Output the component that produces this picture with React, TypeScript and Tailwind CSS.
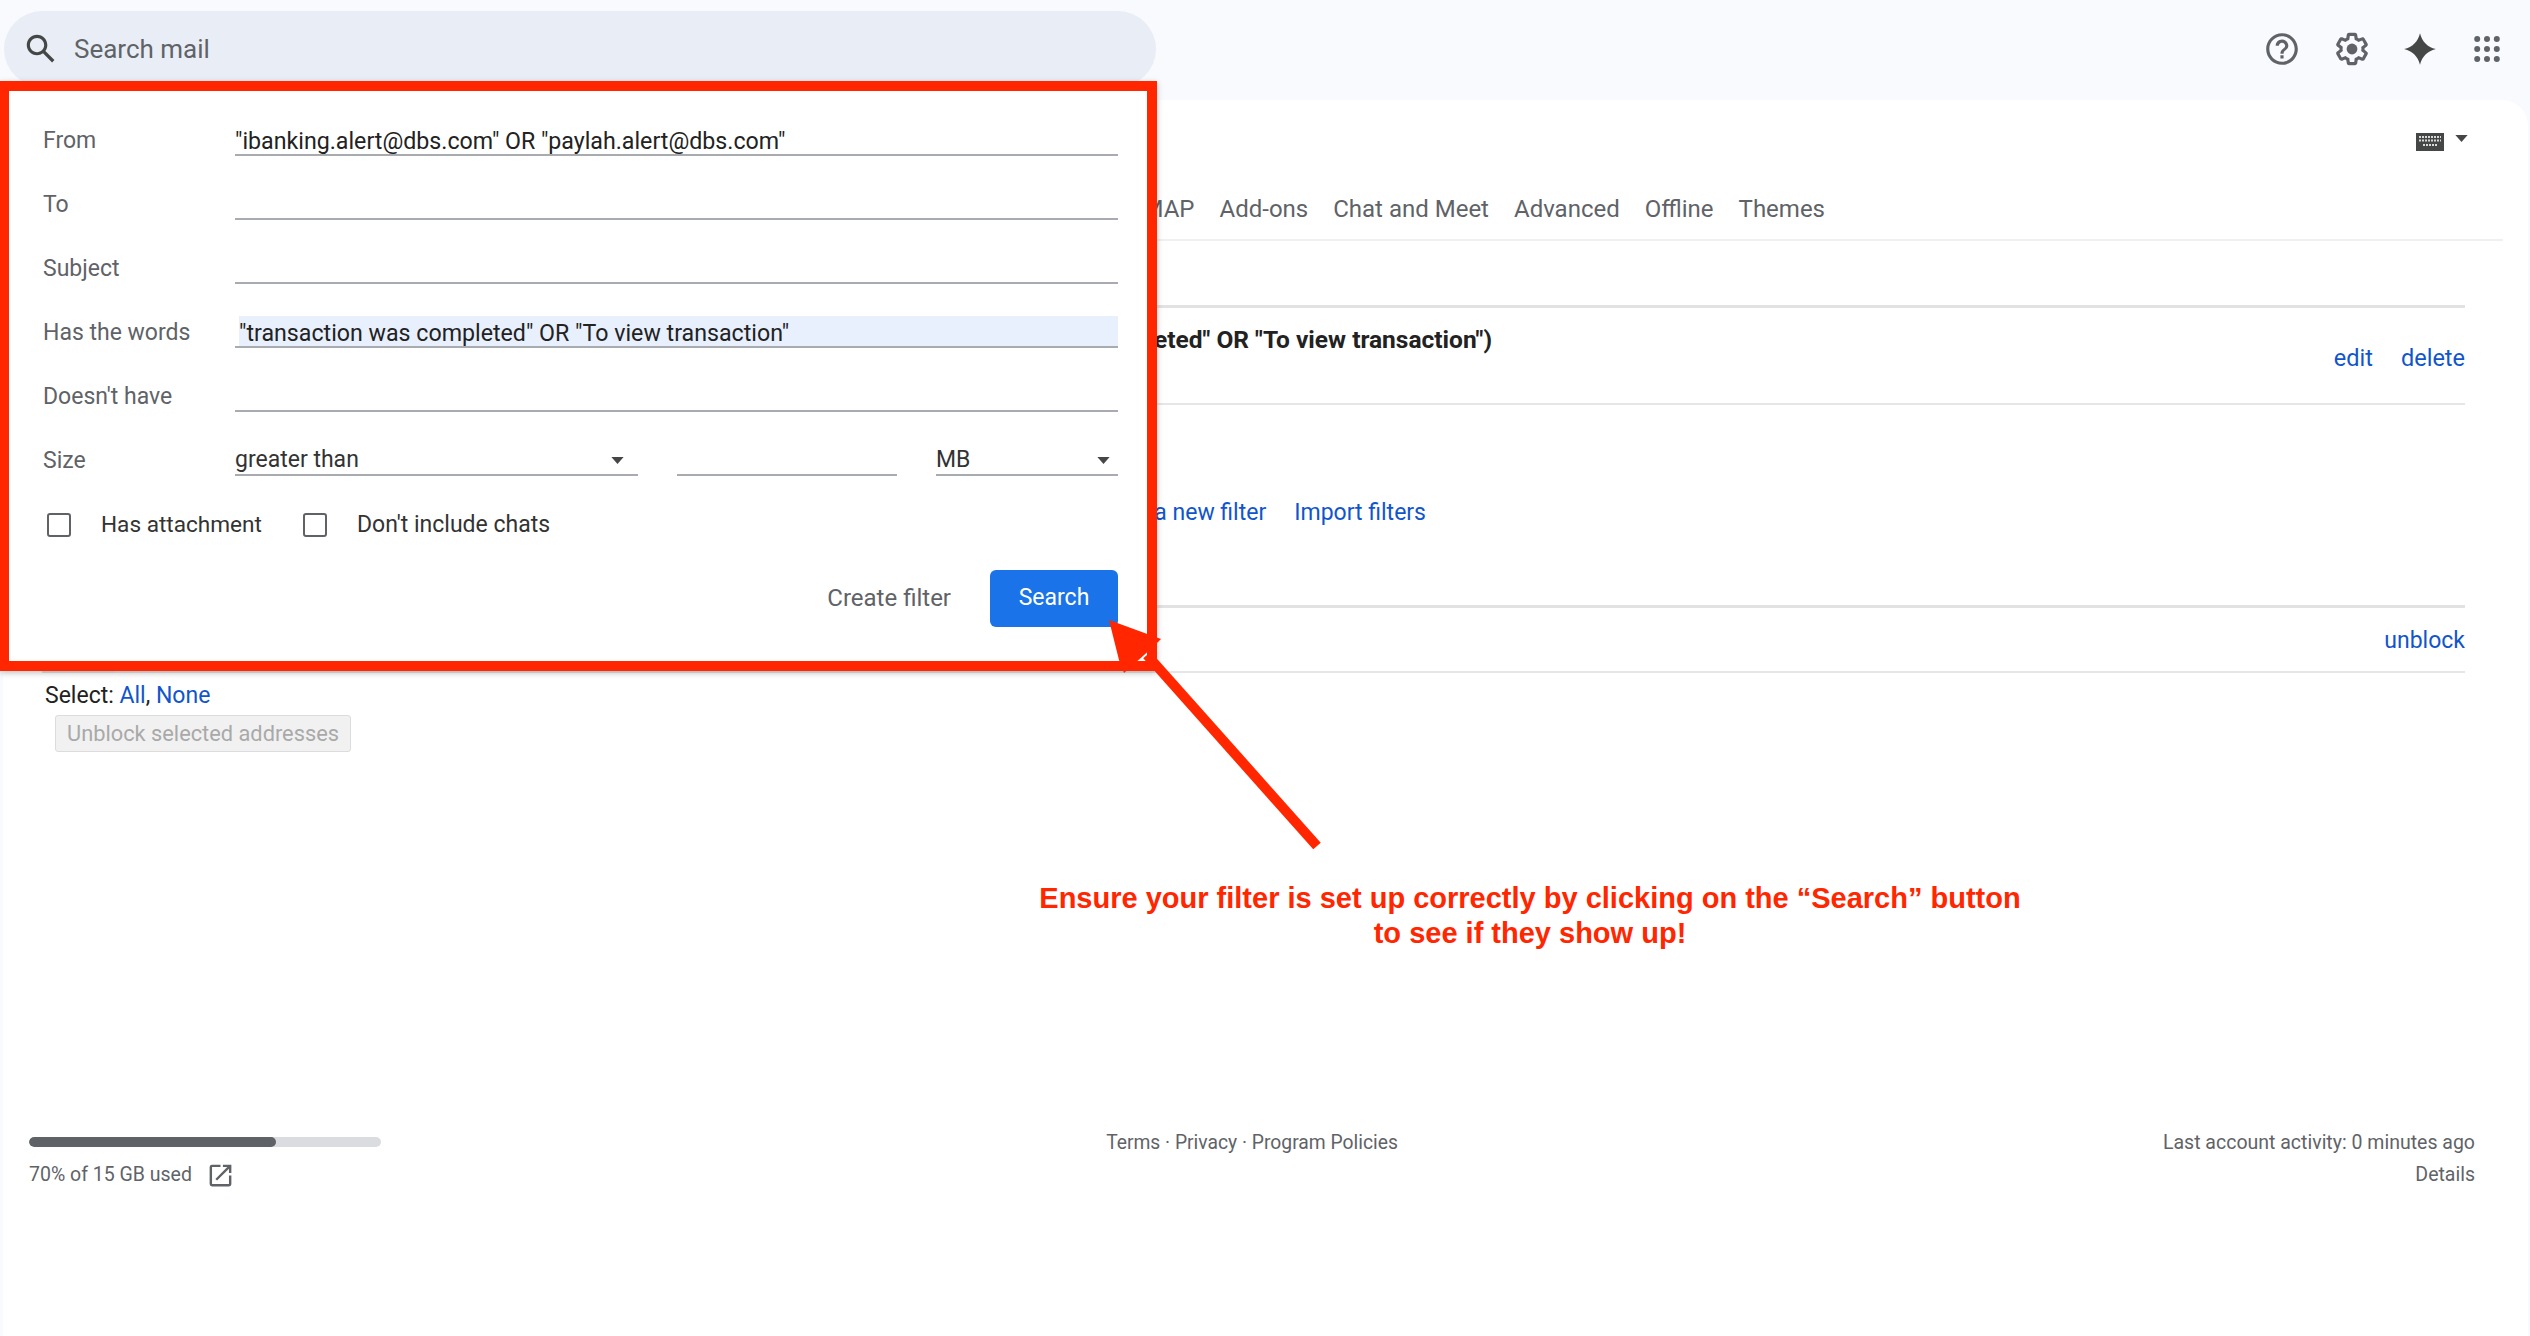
import React from "react";

const FONT = "font-['Roboto',_'Liberation_Sans',_sans-serif]";

/// One labelled row of the search filter form
const FieldRow = ({ label, value, highlight }: { label: string; value?: string; highlight?: boolean }) => (
  <div className="flex h-[64px] items-end">
    <div className="flex h-[32px] w-[192px] shrink-0 items-center pt-[2px] text-[#5f6368]">{label}</div>
    {highlight ? (
      <div className="flex h-[32px] flex-1 items-center border-b-2 border-[#a8abaf] pl-[4px]">
        <div className="flex h-full w-full items-center bg-[#e8f0fe] pt-[3px] text-[23.2px] text-[#222222]">{value}</div>
      </div>
    ) : (
      <div className="flex h-[32px] flex-1 items-center border-b-2 border-[#a8abaf] pt-[3px] text-[23.2px] text-[#222222]">{value}</div>
    )}
  </div>
);

const Caret = ({ className }: { className: string }) => (
  <svg viewBox="0 0 14 8" className={className}>
    <path d="M0 0h14L7 8z" fill="#444746" />
  </svg>
);

const Check = ({ label, className }: { label: string; className: string }) => (
  <div className={`flex items-center ${className}`}>
    <div className="h-[24px] w-[24px] rounded-[3px] border-2 border-[#5f6368] bg-white" />
    <span className="ml-[30px] text-[#333333]">{label}</span>
  </div>
);

const TopIcons = () => (
  <div className="mr-[30px] flex items-center">
    <svg viewBox="0 0 24 24" className="h-[38px] w-[38px]" fill="#5f6368">
      <path d="M11 18h2v-2h-2v2zm1-16C6.48 2 2 6.48 2 12s4.48 10 10 10 10-4.48 10-10S17.52 2 12 2zm0 18c-4.41 0-8-3.59-8-8s3.59-8 8-8 8 3.59 8 8-3.59 8-8 8zm0-14c-2.21 0-4 1.79-4 4h2c0-1.1.9-2 2-2s2 .9 2 2c0 2-3 1.75-3 5h2c0-2.25 3-2.5 3-5 0-2.21-1.79-4-4-4z" />
    </svg>
    <svg viewBox="0 0 24 24" className="ml-[32px] h-[38px] w-[38px]" fill="#5f6368">
      <path d="M13.85 22.25h-3.7c-.74 0-1.36-.54-1.45-1.27l-.27-1.89c-.27-.14-.53-.29-.79-.46l-1.8.72c-.7.26-1.47-.03-1.81-.65L2.2 15.53c-.35-.66-.2-1.44.36-1.88l1.53-1.19c-.01-.15-.02-.3-.02-.46 0-.15.01-.31.02-.46l-1.52-1.19c-.59-.45-.74-1.26-.37-1.88l1.85-3.19c.34-.62 1.11-.9 1.79-.63l1.81.73c.26-.17.52-.32.78-.46l.27-1.91c.09-.7.71-1.25 1.44-1.25h3.7c.74 0 1.36.54 1.45 1.27l.27 1.89c.27.14.53.29.79.46l1.8-.72c.71-.26 1.48.03 1.82.65l1.84 3.18c.36.66.2 1.44-.36 1.88l-1.52 1.19c.01.15.02.3.02.46s-.01.31-.02.46l1.52 1.19c.56.45.72 1.23.37 1.86l-1.86 3.22c-.34.62-1.11.9-1.8.63l-1.8-.72c-.26.17-.52.32-.78.46l-.27 1.91c-.1.68-.72 1.22-1.45 1.22zm-3.23-2h2.76l.37-2.55.53-.22c.44-.18.88-.44 1.34-.78l.45-.34 2.38.96 1.38-2.4-2.03-1.58.07-.56c.03-.26.06-.51.06-.78s-.03-.53-.06-.78l-.07-.56 2.03-1.58-1.39-2.4-2.39.96-.45-.35c-.42-.32-.87-.58-1.33-.77l-.52-.22-.37-2.55h-2.76l-.37 2.55-.53.21c-.44.19-.88.44-1.34.79l-.45.33-2.38-.95-1.39 2.39 2.03 1.58-.07.56a7 7 0 0 0-.06.79c0 .26.02.53.06.78l.07.56-2.03 1.58 1.38 2.4 2.39-.96.45.35c.43.33.86.58 1.33.77l.53.22.38 2.55z" />
      <circle cx="12" cy="12" r="3.4" />
    </svg>
    <svg viewBox="0 0 24 24" className="ml-[30px] h-[38px] w-[38px]" fill="#444746">
      <path d="M12 2c1.300 5.300 4.700 8.700 10 10-5.300 1.300-8.700 4.700-10 10-1.300-5.300-4.700-8.700-10-10 5.300-1.300 8.700-4.700 10-10z" />
    </svg>
    <svg viewBox="0 0 26 26" className="ml-[35px] h-[26px] w-[26px]" fill="#5f6368">
      <circle cx="3.200" cy="3" r="3" />
      <circle cx="13" cy="3" r="3" />
      <circle cx="22.800" cy="3" r="3" />
      <circle cx="3.200" cy="13" r="3" />
      <circle cx="13" cy="13" r="3" />
      <circle cx="22.800" cy="13" r="3" />
      <circle cx="3.200" cy="23" r="3" />
      <circle cx="13" cy="23" r="3" />
      <circle cx="22.800" cy="23" r="3" />
    </svg>
  </div>
);

/// Gmail filter settings page with the search dialog open and a red callout on top
export default function App() {
  return (
    <div className={`${FONT} relative h-[1336px] w-[2530px] overflow-hidden bg-[#f8fafd] text-[23px] leading-[32px]`}>
      {/* top bar */}
      <header className="flex h-[100px] items-start justify-between">
        <div className="ml-[4px] mt-[11px] flex h-[76px] w-[1152px] items-start rounded-[38px] bg-[#e9eef6] pl-[18px] pt-[19px]">
          <svg viewBox="0 0 24 24" className="h-[38px] w-[38px]" fill="#444746">
            <path d="M20.49 19l-5.73-5.73C15.53 12.2 16 10.91 16 9.500 16 5.910 13.090 3 9.500 3S3 5.910 3 9.500 5.910 16 9.500 16c1.410 0 2.700-.47 3.770-1.240L19 20.490 20.490 19zM5 9.500C5 7.010 7.010 5 9.500 5S14 7.010 14 9.500 11.990 14 9.500 14 5 11.990 5 9.500z" />
          </svg>
          <span className="ml-[14px] mt-[1px] text-[26px] leading-[36px] text-[#5f6368]">Search mail</span>
        </div>
        <div className="mt-[30px]">
          <TopIcons />
        </div>
      </header>

      {/* settings card */}
      <main className="ml-[3px] mr-[2px] flex h-[1236px] flex-col rounded-t-[26px] bg-white">
        <div className="mr-[25px] h-[141px] border-b-2 border-[#f0f0f0]">
          <div className="flex h-[93px] items-start justify-end pr-[35px] pt-[33px]">
            <svg viewBox="0 0 28 18" className="h-[18px] w-[28px]">
              <rect width="28" height="18" fill="#444746" />
              <path d="M3 4h22M3 7.500h22M7 12h14" stroke="#d7d9da" strokeWidth="2" strokeDasharray="2 1" />
            </svg>
            <Caret className="ml-[11px] mt-[2px] h-[7px] w-[13px]" />
          </div>
          <div className="flex w-[1822px] justify-end gap-[25px] text-[24px] text-[#5f6368]">
            <span>Forwarding and POP/IMAP</span>
            <span>Add-ons</span>
            <span>Chat and Meet</span>
            <span>Advanced</span>
            <span>Offline</span>
            <span>Themes</span>
          </div>
        </div>

        <div className="ml-[39px] mr-[63px] mt-[64px] flex flex-1 flex-col">
          {/* filter row */}
          <div className="h-[100px] border-b-2 border-t-[3px] border-b-[#e6e6e6] border-t-[#e2e2e2]">
            <div className="flex h-full items-start justify-between">
              <b className="mt-[16px] w-[1450px] whitespace-nowrap text-right text-[24.5px] font-bold text-[#222222]">
                completed" OR "To view transaction")
              </b>
              <div className="mt-[34px] flex gap-[28px] text-[23.5px] text-[#1155cc]">
                <span>edit</span>
                <span>delete</span>
              </div>
            </div>
          </div>
          <div className="flex h-[200px] items-start">
            <div className="mt-[92px] flex w-[1384px] justify-end gap-[28px] text-[#1155cc]">
              <span>Create a new filter</span>
              <span>Import filters</span>
            </div>
          </div>

          {/* blocked addresses */}
          <div className="flex h-[68px] items-start justify-end border-b-2 border-t-[3px] border-b-[#e6e6e6] border-t-[#e2e2e2] pt-[17px] text-[#1155cc]">
            unblock
          </div>
          <div className="-mt-[3px] h-[3px] w-[72px] bg-[#e2e2e2]" />
          <div className="mt-[7px] pl-[3px] text-[#222222]">
            Select: <span className="text-[#1155cc]">All</span>, <span className="text-[#1155cc]">None</span>
          </div>
          <div className="ml-[13px] mt-[3px] flex h-[37px] w-[296px] items-center justify-center rounded-[3px] border border-[#dcdcdc] bg-[#f1f1f1] text-[21.8px] text-[#a9a9a9]">
            Unblock selected addresses
          </div>
        </div>

        {/* footer */}
        <footer className="mb-[145px] ml-[26px] mr-[53px] grid grid-cols-[1fr_auto_1fr] text-[19.5px] leading-[32px] text-[#5f6368]">
          <div>
            <div className="mt-[10px] h-[10px] w-[352px] overflow-hidden rounded-[5px] bg-[#dadce0]">
              <div className="h-full w-[247px] rounded-[5px] bg-[#5f6368]" />
            </div>
            <div className="mt-[12px] flex items-center">
              <span>70% of 15 GB used</span>
              <svg viewBox="0 0 24 24" className="ml-[14px] h-[29px] w-[29px]" fill="#5f6368">
                <path d="M19 19H5V5h7V3H5a2 2 0 0 0-2 2v14a2 2 0 0 0 2 2h14c1.100 0 2-.9 2-2v-7h-2v7zM14 3v2h3.590l-9.830 9.830 1.410 1.410L19 6.410V10h2V3h-7z" />
              </svg>
            </div>
          </div>
          <div className="text-[19.3px]">Terms · Privacy · Program Policies</div>
          <div className="text-right">
            <div>Last account activity: 0 minutes ago</div>
            <div>Details</div>
          </div>
        </footer>
      </main>

      {/* search dialog, framed in red by the annotation */}
      <div className="absolute left-0 top-[81px] h-[590px] w-[1157px] border-[10px] border-l-[9px] border-[#ff2600] bg-white pl-[34px] pr-[29px] pt-[1px] shadow-[0_2px_6px_rgba(0,0,0,0.25)]">
        <FieldRow label="From" value={'"ibanking.alert@dbs.com" OR "paylah.alert@dbs.com"'} />
        <FieldRow label="To" />
        <FieldRow label="Subject" />
        <FieldRow label="Has the words" value={'"transaction was completed" OR "To view transaction"'} highlight />
        <FieldRow label="Doesn't have" />
        <div className="flex h-[64px] items-end">
          <div className="flex h-[32px] w-[192px] shrink-0 items-center pt-[2px] text-[#5f6368]">Size</div>
          <div className="flex h-[32px] w-[403px] items-center justify-between border-b-2 border-[#a8abaf] pr-[14px] pt-[2px] text-[#333333]">
            greater than
            <Caret className="h-[7px] w-[13px]" />
          </div>
          <div className="ml-[39px] h-[32px] w-[220px] border-b-2 border-[#a8abaf]" />
          <div className="ml-[39px] flex h-[32px] flex-1 items-center justify-between border-b-2 border-[#a8abaf] pr-[8px] pt-[2px] text-[#333333]">
            MB
            <Caret className="h-[7px] w-[13px]" />
          </div>
        </div>
        <div className="mt-[33px] flex pl-[4px]">
          <Check label="Has attachment" className="w-[256px] text-[22.6px]" />
          <Check label="Don't include chats" className="text-[23px]" />
        </div>
        <div className="mt-[29px] flex items-center justify-end gap-[39px]">
          <span className="pb-[2px] text-[24px] text-[#5f6368]">Create filter</span>
          <div className="flex h-[57px] w-[128px] items-center justify-center rounded-[6px] bg-[#1a73e8] pb-[1px] text-white">
            Search
          </div>
        </div>
      </div>

      {/* callout arrow */}
      <svg className="absolute left-0 top-0 h-[1336px] w-[2530px]" viewBox="0 0 2530 1336" fill="none">
        <path d="M1109 620 1161 639 1153 647 1124 673 1119 660z" fill="#ff2600" />
        <path d="M1147 655 1317 846" stroke="#ff2600" strokeWidth="10" />
      </svg>
      <div className="absolute left-[1030px] top-[881px] w-[1000px] whitespace-nowrap text-center font-['Liberation_Sans',_sans-serif] text-[29px] font-bold leading-[35px] text-[#ff2600]">
        Ensure your filter is set up correctly by clicking on the “Search” button
        <br />
        to see if they show up!
      </div>
    </div>
  );
}
